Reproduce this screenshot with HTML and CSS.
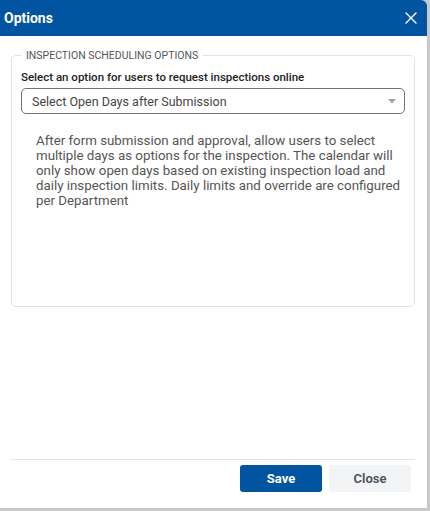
FILE: index.html
```html
<!DOCTYPE html>
<html>
<head>
<meta charset="utf-8">
<link rel="stylesheet" href="styles.css">
</head>
<body>
<div class="dialog">
  <div class="header">
    <span class="title">Options</span>
    <svg class="close-x" width="12" height="12" viewBox="0 0 12 12"><path d="M1 1L11 11M11 1L1 11" stroke="#fff" stroke-width="1.4" stroke-linecap="round"/></svg>
  </div>
  <div class="body">
    <fieldset class="group">
      <legend>INSPECTION SCHEDULING OPTIONS</legend>
      <div class="label">Select an option for users to request inspections online</div>
      <div class="select">
        <span>Select Open Days after Submission</span>
        <svg width="8" height="5" viewBox="0 0 8 5"><path d="M0 0H8L4 4.5Z" fill="#9ca3af"/></svg>
      </div>
      <p class="desc">After form submission and approval, allow users to select multiple days as options for the inspection. The calendar will only show open days based on existing inspection load and daily inspection limits. Daily limits and override are configured per Department</p>
    </fieldset>
  </div>
  <div class="footer">
    <button class="btn save">Save</button>
    <button class="btn close">Close</button>
  </div>
</div>
</body>
</html>
```
FILE: styles.css
```css
html, body {
  margin: 0;
  padding: 0;
  background: #c9c9c9;
  font-family: Roboto, "Liberation Sans", sans-serif;
}
.dialog {
  width: 427px;
  height: 508px;
  background: #fff;
  border-top-right-radius: 6px;
  display: flex;
  flex-direction: column;
  overflow: hidden;
}
.header {
  height: 36px;
  background: #0054a0;
  display: flex;
  align-items: center;
  justify-content: space-between;
  padding: 0 10px 0 4px;
  flex-shrink: 0;
}
.title {
  color: #fff;
  font-size: 14px;
  font-weight: 700;
}
.body {
  flex: 1;
  padding: 13px 12px 0 11px;
}
.group {
  margin: 0;
  border: 1px solid #e3e3e3;
  border-radius: 5px;
  padding: 8px 9px 0 9px;
  height: 258px;
  box-sizing: border-box;
}
.group legend {
  font-size: 10.5px;
  color: #555;
  padding: 0 5px;
  margin-left: 0;
}
.label {
  font-size: 11.5px;
  font-weight: 500;
  color: #222;
  line-height: 14px;
}
.select {
  margin-top: 4px;
  height: 26px;
  box-sizing: border-box;
  border: 1px solid #6b7280;
  border-radius: 5px;
  display: flex;
  align-items: center;
  justify-content: space-between;
  padding: 0 8px 0 10px;
  font-size: 12.5px;
  color: #444;
}
.desc {
  margin: 19px 2px 0 15px;
  font-size: 13.3px;
  line-height: 15px;
  color: #555;
}
.footer {
  margin: 0 12px 0 11px;
  border-top: 1px solid #e5e5e5;
  padding: 5px 4px 16px 0;
  display: flex;
  justify-content: flex-end;
  gap: 7px;
}
.btn {
  width: 82px;
  height: 27px;
  border: none;
  border-radius: 3px;
  font-family: Roboto, "Liberation Sans", sans-serif;
  font-size: 13px;
  font-weight: 700;
}
.save {
  background: #0054a0;
  color: #fff;
}
.close {
  background: #f3f4f6;
  color: #4b4f57;
  font-weight: 600;
}
```
